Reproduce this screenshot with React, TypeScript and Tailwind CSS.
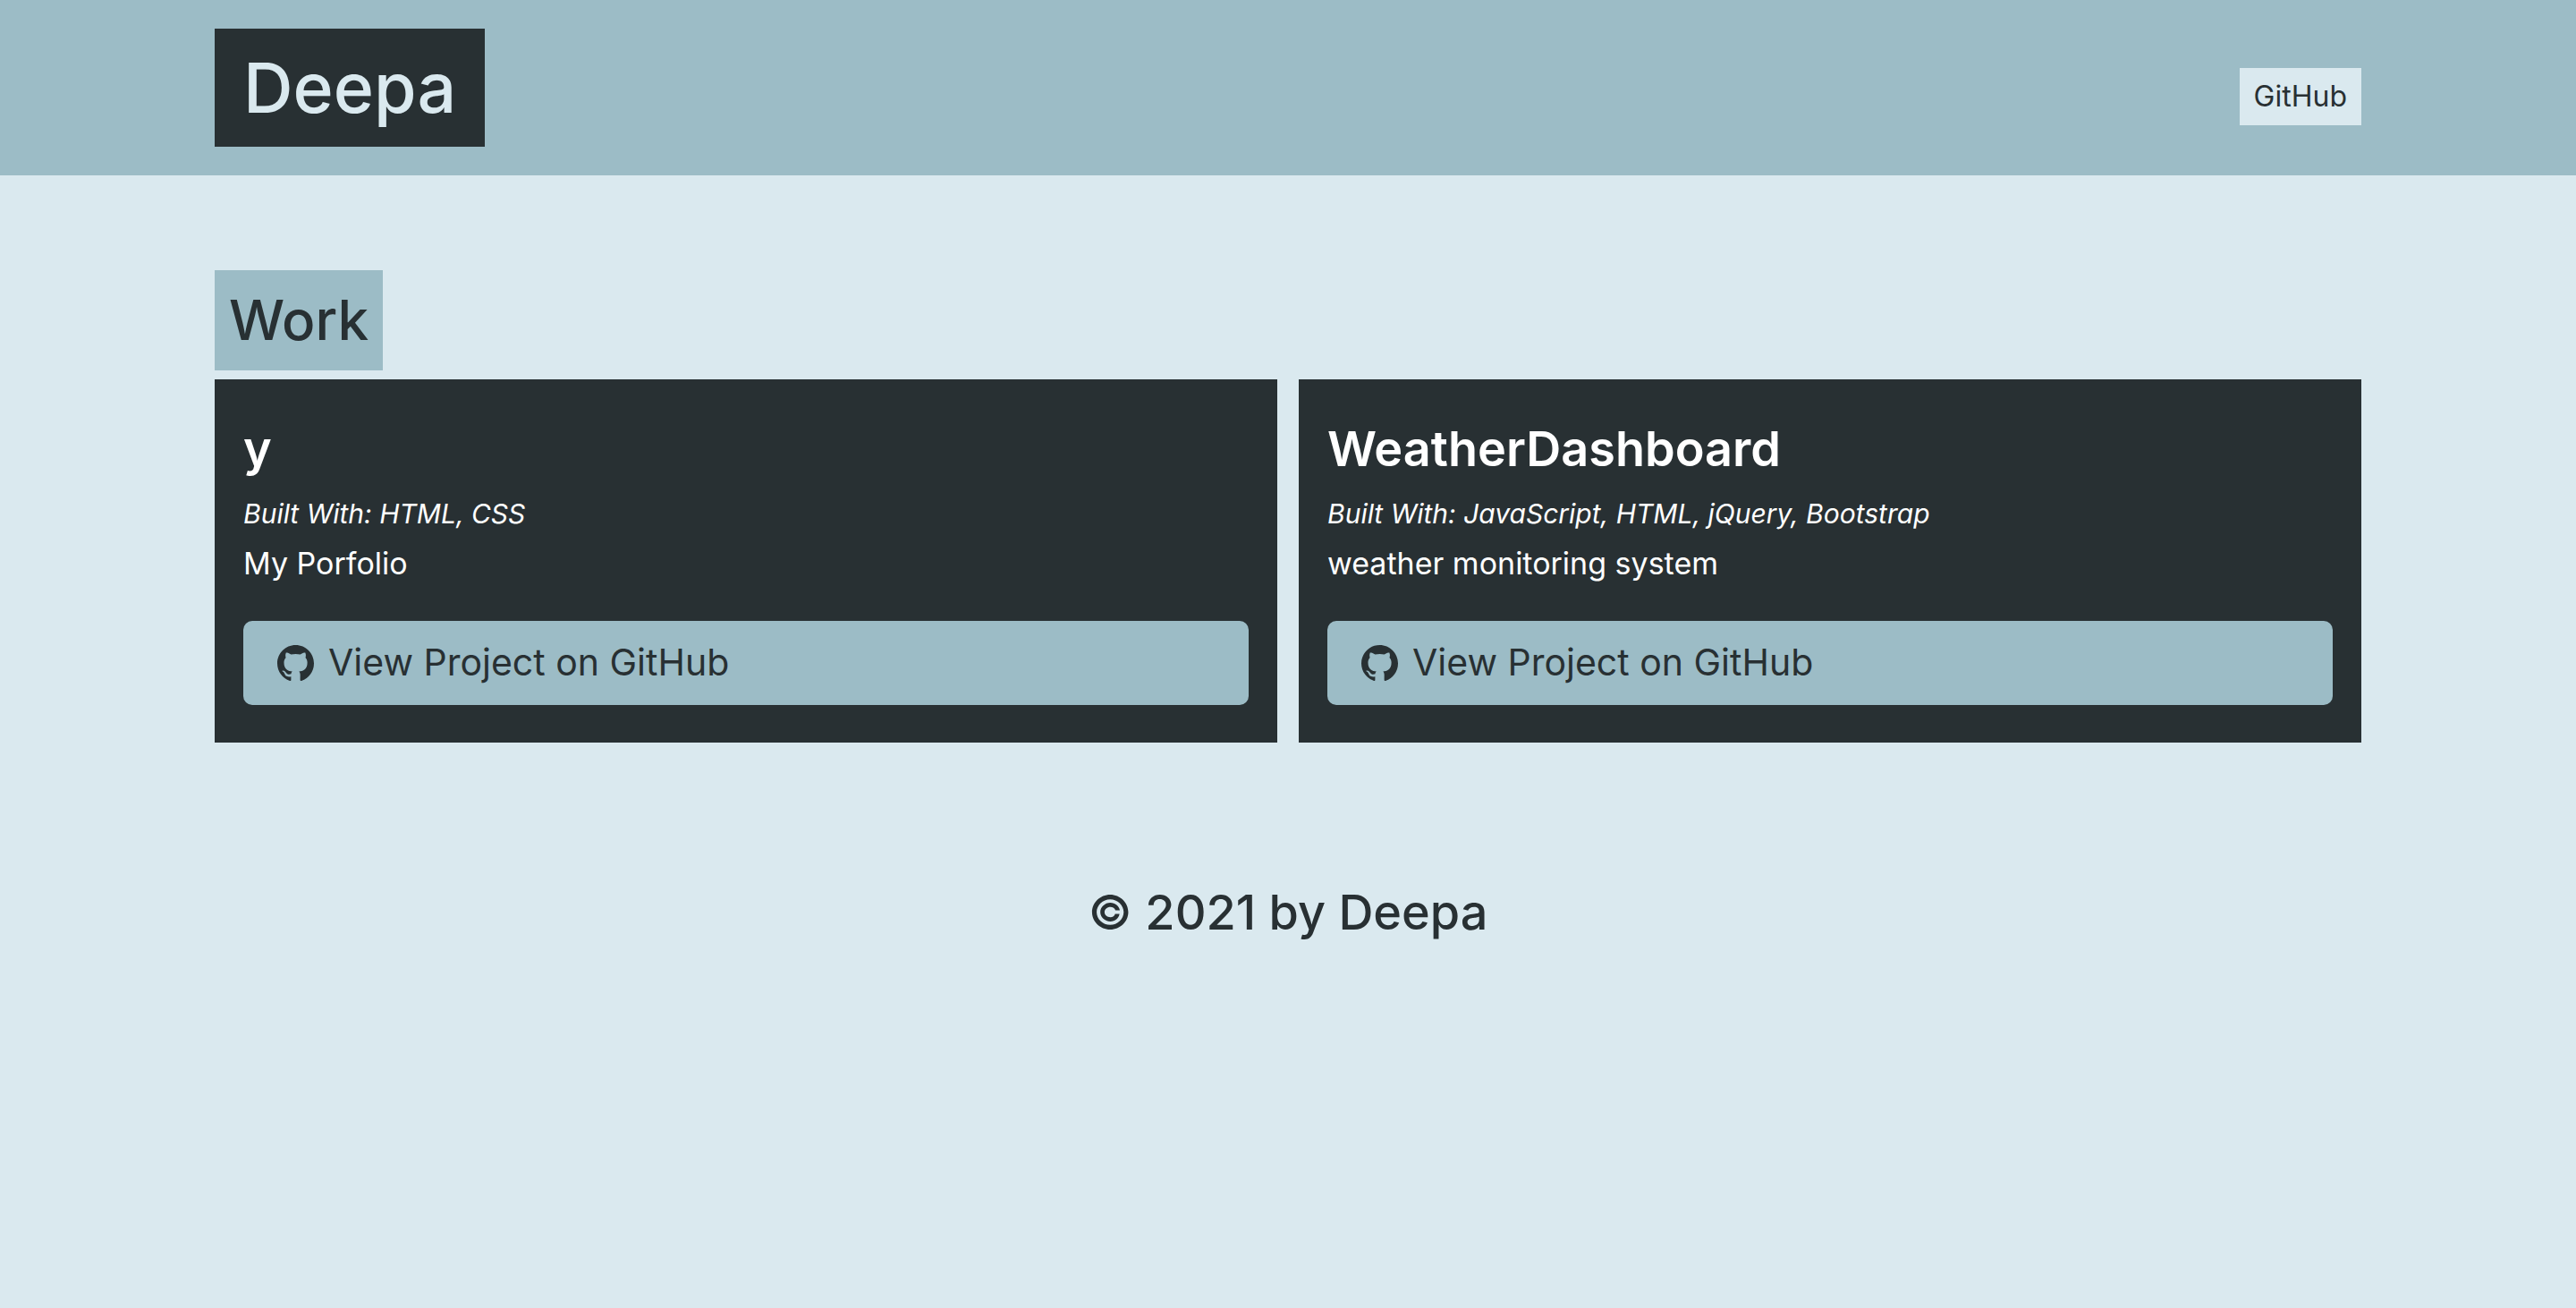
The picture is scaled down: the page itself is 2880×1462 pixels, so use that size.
import { BsGithub } from "react-icons/bs";

type Project = { name: string; tools: string; summary: string; href: string };

const projects: Project[] = [
  { name: "y", tools: "HTML, CSS", summary: "My Porfolio", href: "#portfolio" },
  {
    name: "WeatherDashboard",
    tools: "JavaScript, HTML, jQuery, Bootstrap",
    summary: "weather monitoring system",
    href: "#weather",
  },
];

function ProjectCard({ project }: { project: Project }) {
  return (
    <article className="bg-[#283033] px-8 pt-10 pb-[42px] text-white">
      <h3 className="text-[54px] leading-[76px] font-semibold">{project.name}</h3>
      <p className="mt-2 text-[30px] leading-[52px] italic">Built With: {project.tools}</p>
      <p className="text-[34px] leading-[60px]">{project.summary}</p>
      <a
        href={project.href}
        className="mt-[34px] flex h-[94px] items-center gap-4 rounded-[10px] bg-[#9cbcc6] px-[38px] text-[41px] text-[#283033]"
      >
        <BsGithub aria-hidden="true" className="size-[41px]" />
        View Project on GitHub
      </a>
    </article>
  );
}

export default function App() {
  return (
    <div className="min-h-screen bg-[#dae9ef] font-[Inter,sans-serif] text-[#283033]">
      <header className="bg-[#9cbcc6] py-8">
        <div className="mx-auto flex w-10/12 items-center justify-between">
          <h1 className="bg-[#283033] px-8 text-[77px] leading-[132px] font-medium text-[#dae9ef]">Deepa</h1>
          <nav className="pt-5">
            <a href="#github" className="block bg-[#dae9ef] px-4 text-[32px] leading-[64px]">
              GitHub
            </a>
          </nav>
        </div>
      </header>
      <main className="mx-auto w-10/12 pt-[106px]">
        <h2 className="w-fit bg-[#9cbcc6] px-4 text-[62px] leading-[112px] font-medium">Work</h2>
        <section className="mt-[10px] grid grid-cols-2 gap-6">
          {projects.map((project) => (
            <ProjectCard key={project.name} project={project} />
          ))}
        </section>
      </main>
      <footer className="pt-[150px] text-center text-[54px] leading-[80px] font-medium">© 2021 by Deepa</footer>
    </div>
  );
}
